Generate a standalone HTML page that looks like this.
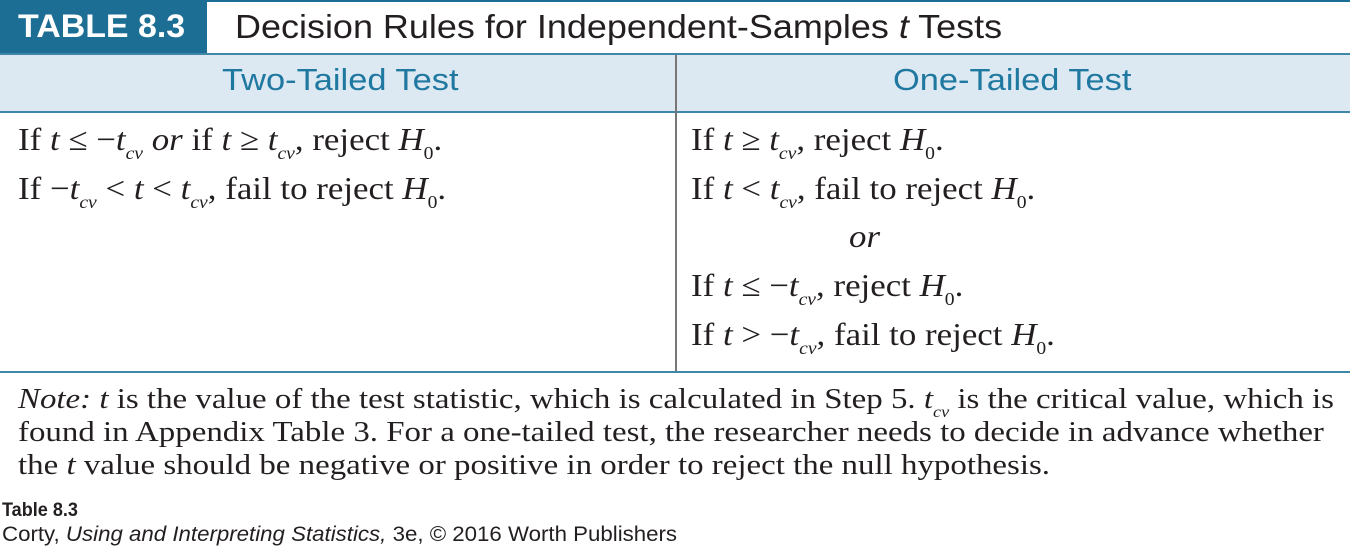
<!DOCTYPE html>
<html><head><meta charset="utf-8"><style>
body{margin:0;width:1350px;height:552px;background:#fff;position:relative;overflow:hidden;font-family:"Liberation Serif",serif;color:#231f20}
.abs{position:absolute;white-space:nowrap;transform-origin:0 0}
.ttl{left:0;top:0;width:207px;height:54px;background:#1d6e94}
.ttl span{position:absolute;left:18px;top:8px;font:bold 32px "Liberation Sans",sans-serif;color:#fff;transform-origin:0 0;transform:scaleX(1.06)}
.tline{left:0;top:0;width:1350px;height:2px;background:#1d6e94}
.head{left:0;top:53px;width:1350px;height:56px;background:#dde9f2;border-top:2px solid #3f86a9;border-bottom:2px solid #3f86a9}
.h{font:31px "Liberation Sans",sans-serif;color:#1f78a0;top:62px;transform:scaleX(1.11)}
.vl{left:675px;top:55px;width:2px;height:317px;background:#777}
.bl{left:0;top:371px;width:1350px;height:2px;background:#3f86a9}
.r{font-size:32px;transform:scaleX(1.09)}
i{font-style:italic}
sub{font-size:18px;font-style:italic;vertical-align:-9px}
.n{font-size:29px;left:18px;transform:scaleX(1.135)}
</style></head><body>
<div class="abs tline"></div>
<div class="abs ttl"><span>TABLE 8.3</span></div>
<div class="abs" style="left:235px;top:8px;font:33px 'Liberation Sans',sans-serif;color:#231f20;transform:scaleX(1.09)">Decision Rules for Independent-Samples <i>t</i> Tests</div>
<div class="abs head"></div>
<div class="abs h" style="left:222px">Two-Tailed Test</div>
<div class="abs h" style="left:893px">One-Tailed Test</div>
<div class="abs vl"></div>
<div class="abs r" style="left:18px;top:121px">If <i>t</i> ≤ −<i>t</i><sub>cv</sub> <i>or</i> if <i>t</i> ≥ <i>t</i><sub>cv</sub>, reject <i>H</i><sub style="font-style:normal">0</sub>.</div>
<div class="abs r" style="left:18px;top:170px">If −<i>t</i><sub>cv</sub> &lt; <i>t</i> &lt; <i>t</i><sub>cv</sub>, fail to reject <i>H</i><sub style="font-style:normal">0</sub>.</div>
<div class="abs r" style="left:691px;top:121px">If <i>t</i> ≥ <i>t</i><sub>cv</sub>, reject <i>H</i><sub style="font-style:normal">0</sub>.</div>
<div class="abs r" style="left:691px;top:170px">If <i>t</i> &lt; <i>t</i><sub>cv</sub>, fail to reject <i>H</i><sub style="font-style:normal">0</sub>.</div>
<div class="abs r" style="left:849px;top:218px"><i>or</i></div>
<div class="abs r" style="left:691px;top:267px">If <i>t</i> ≤ −<i>t</i><sub>cv</sub>, reject <i>H</i><sub style="font-style:normal">0</sub>.</div>
<div class="abs r" style="left:691px;top:316px">If <i>t</i> &gt; −<i>t</i><sub>cv</sub>, fail to reject <i>H</i><sub style="font-style:normal">0</sub>.</div>
<div class="abs bl"></div>
<div class="abs n" style="top:383px"><i>Note:</i> <i>t</i> is the value of the test statistic, which is calculated in Step 5. <i>t</i><sub style="font-size:16px">cv</sub> is the critical value, which is</div>
<div class="abs n" style="top:416px">found in Appendix Table 3. For a one-tailed test, the researcher needs to decide in advance whether</div>
<div class="abs n" style="top:449px">the <i>t</i> value should be negative or positive in order to reject the null hypothesis.</div>
<div class="abs" style="left:2px;top:500px;font:bold 19px 'Liberation Sans',sans-serif;transform:scaleX(.95)">Table 8.3</div>
<div class="abs" style="left:2px;top:523px;font:21px 'Liberation Sans',sans-serif;transform:scaleX(1.06)">Corty, <i>Using and Interpreting Statistics,</i> 3e, © 2016 Worth Publishers</div>
</body></html>
